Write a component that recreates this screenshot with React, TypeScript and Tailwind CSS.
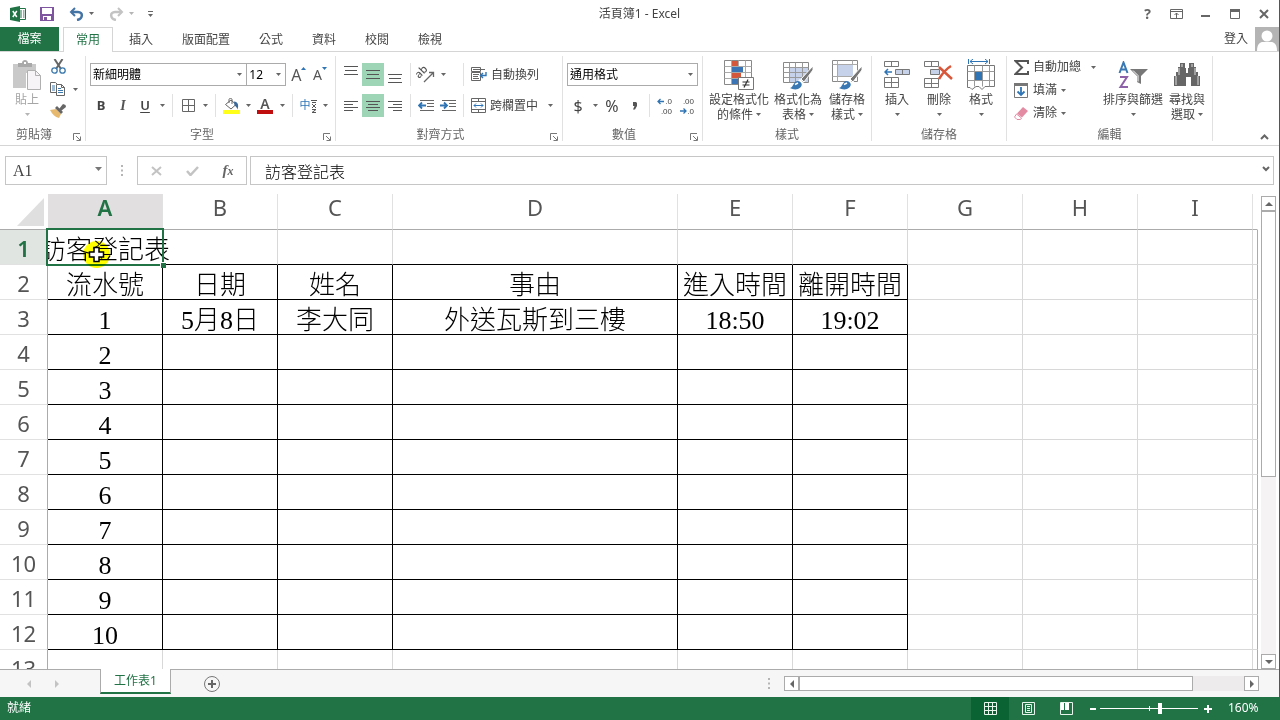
import type { ReactNode } from "react";
import { clsx } from "clsx";

/* ---------- small building blocks ---------- */

const Svg = ({ w, h, children }: { w: number; h: number; children: ReactNode }) => (
  <svg width={w} height={h} viewBox={`0 0 ${w} ${h}`} fill="none" className="shrink-0" aria-hidden="true">
    {children}
  </svg>
);

const Caret = ({ light }: { light?: boolean }) => (
  <Svg w={5} h={3}>
    <path d="M0 0h5L2.5 3z" fill={light ? "#b5b5b5" : "#666"} />
  </Svg>
);

const CaretButton = ({ label, light }: { label: string; light?: boolean }) => (
  <button aria-label={label} className="flex h-full w-3 items-center justify-center">
    <Caret light={light} />
  </button>
);

const Tool = ({ label, active, children }: { label: string; active?: boolean; children: ReactNode }) => (
  <button
    aria-label={label}
    className={clsx("flex h-full w-[22px] items-center justify-center", active && "bg-[#9fd5b7]")}
  >
    {children}
  </button>
);

const Sep = () => <div className="mx-1 h-full w-px bg-[#e1e1e1]" />;

const Row = ({ children }: { children: ReactNode }) => <div className="flex h-[23px] items-center">{children}</div>;

const Launcher = ({ label }: { label: string }) => (
  <button aria-label={label} className="flex h-[13px] w-[17px] items-end justify-center">
    <Svg w={8} h={8}>
      <path d="M.5 7V.5H7M3 3l4 4M7.5 3.5v4h-4" stroke="#777" />
    </Svg>
  </button>
);

type GroupProps = { title: string; width: string; launcher?: boolean; children: ReactNode };

const Group = ({ title, width, launcher, children }: GroupProps) => (
  <section aria-label={title} className={clsx("flex shrink-0 flex-col border-r border-[#e1e1e1]", width)}>
    <div className="min-h-0 flex-1">{children}</div>
    <div className="flex h-[13px] items-center">
      <span className="flex-1 text-center leading-[13px] text-[#666]">{title}</span>
      {launcher && <Launcher label={`${title}設定`} />}
    </div>
  </section>
);

type BigProps = { icon: ReactNode; lines: string[]; width: string; disabled?: boolean };

const BigButton = ({ icon, lines, width, disabled }: BigProps) => (
  <button
    disabled={disabled}
    className={clsx("flex flex-col items-center pt-[2px]", width, disabled ? "text-[#a6a6a6]" : "text-[#444]")}
  >
    <span className="flex h-[34px] items-center justify-center">{icon}</span>
    <span className="leading-[15px] whitespace-nowrap">{lines[0]}</span>
    <span className="flex h-[15px] items-center justify-center gap-[3px] leading-[15px] whitespace-nowrap">
      {lines[1]}
      <Caret light={disabled} />
    </span>
  </button>
);

type DropProps = { label: string; value: string; width: string };

const DropDown = ({ label, value, width }: DropProps) => (
  <div className={clsx("relative h-[23px]", width)}>
    <select
      aria-label={label}
      className="h-full w-full appearance-none border border-[#ababab] bg-white pl-[2px] text-xs text-black"
    >
      <option>{value}</option>
    </select>
    <span className="pointer-events-none absolute inset-y-0 right-[5px] flex items-center">
      <Caret />
    </span>
  </div>
);

/* ---------- icons ---------- */

const ExcelIcon = () => (
  <Svg w={16} h={16}>
    <path d="M8 2.5h7.5v11H8" fill="#fff" stroke="#217346" />
    <path d="M10 5h2M13 5h1.5M10 7h2M13 7h1.5M10 9h2M13 9h1.5M10 11h2M13 11h1.5" stroke="#217346" />
    <path d="M0 2l10-2v16L0 14z" fill="#217346" />
    <path d="M2.8 5l4 6M6.8 5l-4 6" stroke="#fff" strokeWidth="1.5" />
  </Svg>
);

const SaveIcon = () => (
  <Svg w={14} h={14}>
    <path d="M0 0h14v14H0z" fill="#8055a0" />
    <path d="M2 1h10v6H2z" fill="#fff" />
    <path d="M3 9h8v4H3z" fill="#fff" />
    <path d="M4 10h3v3H4z" fill="#8055a0" />
  </Svg>
);

const UndoIcon = () => (
  <Svg w={15} h={14}>
    <path d="M6 1L2 5l4 4" stroke="#4473a5" strokeWidth="2" />
    <path d="M2 5h7c5.500 0 5 7-1 8" stroke="#4473a5" strokeWidth="2.500" />
  </Svg>
);

const RedoIcon = () => (
  <Svg w={15} h={14}>
    <path d="M9 1l4 4-4 4" stroke="#c3c3c3" strokeWidth="2" />
    <path d="M13 5H6C.5 5 1 12 7 13" stroke="#c3c3c3" strokeWidth="2.500" />
  </Svg>
);

const PasteIcon = () => (
  <Svg w={28} h={30}>
    <path d="M0 4h23v9H13v15H0z" fill="#c9c9c9" />
    <path d="M5 7V3h4c0-4 6-4 6 0h4v4z" fill="#a9a9a9" />
    <path d="M11 2h2v2h-2z" fill="#fff" />
    <path d="M14.500 10.500h8l5 5v14h-13z" fill="#f7f4f8" stroke="#b0b0b0" />
    <path d="M22.500 10.500v5h5" stroke="#b0b0b0" />
  </Svg>
);

const CutIcon = () => (
  <Svg w={15} h={16}>
    <path d="M3.500 0L10 10M11.500 0L5 10" stroke="#666" strokeWidth="2" />
    <circle cx="3.500" cy="11.500" r="2.700" stroke="#3a78ad" strokeWidth="1.300" />
    <circle cx="11.500" cy="11.500" r="2.700" stroke="#3a78ad" strokeWidth="1.300" />
  </Svg>
);

const CopyIcon = () => (
  <Svg w={16} h={14}>
    <path d="M.5.5h5l2 2v8h-7z" fill="#fff" stroke="#666" />
    <path d="M2 4h3M2 6h3M2 8h3" stroke="#3a78ad" />
    <path d="M6.500 2.500h5l3 3v8h-8z" fill="#fff" stroke="#666" />
    <path d="M11.500 2.500v3h3" stroke="#666" />
    <path d="M8 6.500h3M8 8.500h5M8 10.500h5" stroke="#3a78ad" />
  </Svg>
);

const BrushIcon = () => (
  <Svg w={16} h={14}>
    <path d="M0 6l6-1 5 5-2 4C5 13 2 10 0 6z" fill="#e6b96e" />
    <path d="M5 4l2-2 6 6-2 2z" fill="#666" />
    <path d="M9 5l4-5 2.500 1L16 3l-5 4z" fill="#666" />
  </Svg>
);

const GridIcon = () => (
  <Svg w={13} h={13}>
    <path d="M.5.5h12v12H.5zM6.500.5v12M.5 6.500h12" stroke="#666" />
  </Svg>
);

const FillIcon = () => (
  <Svg w={17} h={16}>
    <path d="M2.500 6.500L8 2l5 4.500L8 11z" fill="#fff" stroke="#666" />
    <path d="M6 5V1.500C6 0 9 0 9 1.500V6" stroke="#666" />
    <path d="M11 3.500c4 0 5 4 3.500 8-.5-2-1.500-3-3-4z" fill="#3a6a9c" />
    <path d="M0 12h17v4H0z" fill="#ffff1a" />
  </Svg>
);

const OrientationIcon = () => (
  <Svg w={22} h={23}>
    <text x="4" y="16" fontSize="11" fontFamily="Noto Sans" fontWeight="500" fill="#555" transform="rotate(-45 4 16)">
      ab
    </text>
    <path d="M9 19l9-9M14 9.500h4.500V14" stroke="#666" strokeWidth="1.300" />
  </Svg>
);

const IndentIcon = ({ out }: { out?: boolean }) => (
  <Svg w={16} h={11}>
    <path d="M2 .5h14M9 3.500h7M9 6.500h7M2 10.500h14" stroke="#666" />
    {out ? (
      <path d="M1 5.500h7M4 2.500l-3 3 3 3" stroke="#2f74b5" strokeWidth="1.800" />
    ) : (
      <path d="M0 5.500h7M4 2.500l3 3-3 3" stroke="#2f74b5" strokeWidth="1.800" />
    )}
  </Svg>
);

/* horizontal strokes, given as [start, end] on a 14px line */
const LinesIcon = ({ spans, shift = 0 }: { spans: number[][]; shift?: number }) => (
  <Svg w={14} h={20}>
    {spans.map(([a, b], i) => (
      <path key={i} d={`M${a} ${5.5 + shift + i * (spans.length === 3 ? 4 : 3)}H${b}`} stroke="#555" />
    ))}
  </Svg>
);

const WrapIcon = () => (
  <Svg w={16} h={15}>
    <path d="M.5.5h9v4h-9zM.5 5.500h9v8h-9z" stroke="#666" />
    <path d="M2 2.500h12M2 7.500h6M2 9.500h5M2 11.500h6" stroke="#666" />
    <path d="M15 5v3.500H9.500M12 6L9.500 8.500 12 11" stroke="#2f74b5" strokeWidth="1.400" />
  </Svg>
);

const MergeIcon = () => (
  <Svg w={15} h={15}>
    <path d="M.5.5h14v14H.5zM.5 3.500h14M.5 11.500h14M7.500.5v3M7.500 11.500v3" stroke="#666" />
    <path d="M3 7.500h9M5 5.500l-2 2 2 2M10 5.500l2 2-2 2" stroke="#2f74b5" />
  </Svg>
);

const DecimalIcon = ({ more }: { more?: boolean }) => (
  <Svg w={18} h={20}>
    <g fontSize="8" fontFamily="Liberation Sans" fill="#444" textAnchor="end">
      <text x="16" y="8">
        {more ? ".0" : ".00"}
      </text>
      <text x="16" y="18">
        {more ? ".00" : ".0"}
      </text>
    </g>
    {more ? (
      <path d="M2 5.500h6M4.500 3L2 5.500 4.500 8" stroke="#2f74b5" strokeWidth="1.300" />
    ) : (
      <path d="M2 15h6M5.500 12.500L8 15l-2.500 2.500" stroke="#2f74b5" strokeWidth="1.300" />
    )}
  </Svg>
);

const ConditionalIcon = () => (
  <Svg w={30} h={32}>
    <path d="M.5 1.500h27v24H.5z" fill="#fff" stroke="#888" />
    <path d="M.5 7.500h27M.5 13.500h27M.5 19.500h27M7.500 1.500v24M14.500 1.500v24M21.500 1.500v24" stroke="#aaa" />
    <path d="M8 2h6v5H8zM8 14h9v5H8z" fill="#d5573b" />
    <path d="M8 8h11v5H8zM8 20h6v5H8z" fill="#3a74b4" />
    <path d="M14.500 18.500h15v12h-15z" fill="#fff" stroke="#777" />
    <path d="M18.500 23h7M18.500 26h7M24 20.500l-4 8" stroke="#333" strokeWidth="1.200" />
  </Svg>
);

const Brush = () => (
  <>
    <path d="M30 7L18 20l3 3 9-12z" fill="#777" stroke="#fff" />
    <path d="M17 20l4 4-2 3-5-4z" fill="#fff" />
    <path d="M7 29c4-1 3-7 8-7 5 1 5 6 0 8-3 1-6 0-8-1z" fill="#3a78b4" />
    <path d="M12 25.500l3-1.500" stroke="#fff" strokeWidth="1.500" />
  </>
);

const FormatTableIcon = () => (
  <Svg w={30} h={32}>
    <path d="M.5 3.500h25v20H.5z" fill="#fff" stroke="#888" />
    <path d="M7 9h18v14H7z" fill="#c5d2ea" />
    <path d="M.5 8.500h25M.5 13.500h25M.5 18.500h25M6.500 3.500v20M12.500 3.500v20M19.500 3.500v20" stroke="#999" />
    <Brush />
  </Svg>
);

const CellStyleIcon = () => (
  <Svg w={30} h={32}>
    <path d="M.5 1.500h25v21H.5z" fill="#fff" stroke="#888" />
    <path d="M.5 5.500h25M.5 17.500h25M5.500 1.500v21M20.500 1.500v21" stroke="#aaa" />
    <path d="M6 6h15v11H6z" fill="#c5d2ea" />
    <Brush />
  </Svg>
);

const InsertCellsIcon = () => (
  <Svg w={26} h={30}>
    <path d="M.5 1.500h14v5H.5zM7.500 1.500v5M.5 17.500h14v10H.5zM7.500 17.500v10M.5 22.500h14" fill="#fff" stroke="#777" />
    <path d="M11.500 9.500h14v5h-14zM18.500 9.500v5" fill="#c5d2ea" stroke="#777" />
    <path d="M1 12h7M4 9l-3 3 3 3" stroke="#2f74b5" strokeWidth="1.500" />
  </Svg>
);

const DeleteCellsIcon = () => (
  <Svg w={30} h={30}>
    <path d="M.5 1.500h14v5H.5zM7.500 1.500v5M.5 18.500h14v9H.5zM7.500 18.500v9M.5 23.500h14" fill="#fff" stroke="#777" />
    <path d="M6.500 9.500h9v5h-9z" fill="#c5d2ea" stroke="#777" />
    <path d="M15 7l13 12M27 6C22 9 18 14 15 19" stroke="#d8573a" strokeWidth="2.500" />
  </Svg>
);

const FormatCellsIcon = () => (
  <Svg w={29} h={32}>
    <path d="M1.500 0v5M22.500 0v5M3 2.500h18M6 0L3 2.500 6 5M18 0l3 2.500L18 5" stroke="#2f74b5" />
    <path d="M.5 6.500h27v21H18l-3 3-3-3H9l-4 3-2-2H.5z" fill="#fff" stroke="#777" />
    <path d="M.5 12.500h27M.5 21.500h27M7.500 6.500v21M15.500 6.500v21M22.500 6.500v21" stroke="#999" />
    <path d="M8 13h7v8H8z" fill="#2f74b5" />
  </Svg>
);

const SumIcon = () => (
  <Svg w={15} h={15}>
    <path d="M14 4V1H1.500l6.500 6.500L1.500 14H14v-3" stroke="#555" strokeWidth="2" />
  </Svg>
);

const FillDownIcon = () => (
  <Svg w={14} h={15}>
    <path d="M.5.5h13v14H.5z" fill="#fff" stroke="#777" />
    <path d="M0 0h14v3H0z" fill="#777" />
    <path d="M7 4v8M3.500 8.500L7 12l3.500-3.500" stroke="#2f74b5" strokeWidth="1.800" />
  </Svg>
);

const EraserIcon = () => (
  <Svg w={14} h={13}>
    <path d="M9 0l5 4-6 6.500L3 6.500z" fill="#e48ba4" />
    <path d="M2.500 7l5 4-1 1.500H3L.5 10z" fill="#fff" stroke="#e48ba4" />
  </Svg>
);

const SortIcon = () => (
  <Svg w={30} h={28}>
    <path d="M1.500 12L5.500 1.500 9.500 12M3 8.500h5" stroke="#3a78b4" strokeWidth="2" />
    <path d="M2 16h7L2.500 26H10" stroke="#8d62a8" strokeWidth="2" />
    <path d="M12 8h18l-7 7v8l-4-2v-6z" fill="#777" />
    <path d="M15 9.500l5 5v6" stroke="#fff" />
  </Svg>
);

const FindIcon = () => (
  <Svg w={26} h={26}>
    <path d="M6 1h5v5h1v5h2V6h1V1h5v4h2v5h2v4h2v10h-9v-9h-5v9H0V14h2v-4h2V5h2z" fill="#666" />
    <path d="M2 14v9M24 14v9M5 6v7M21 6v7M8 2v3M18 2v3" stroke="#ddd" />
  </Svg>
);

/* ---------- title bar and tabs ---------- */

const TitleBar = () => (
  <header className="flex h-[27px] shrink-0 items-center">
    <div className="flex flex-1 items-center pl-[10px]">
      <ExcelIcon />
      <button aria-label="儲存檔案" className="ml-[14px]">
        <SaveIcon />
      </button>
      <button aria-label="復原" className="ml-[15px] flex items-center gap-[5px]">
        <UndoIcon />
        <Caret />
      </button>
      <button aria-label="取消復原" className="ml-[15px] flex items-center gap-[5px]">
        <RedoIcon />
        <Caret light />
      </button>
      <button aria-label="自訂快速存取工具列" className="ml-[14px]">
        <Svg w={5} h={6}>
          <path d="M0 .5h5" stroke="#666" />
          <path d="M0 3h5L2.500 6z" fill="#666" />
        </Svg>
      </button>
    </div>
    <h1 className="text-xs text-[#444]">活頁簿1 - Excel</h1>
    <div className="flex flex-1 items-center justify-end pr-[10px]">
      <button aria-label="說明" className="w-[29px] text-sm font-bold text-[#666]">
        ?
      </button>
      <button aria-label="功能區顯示選項" className="flex w-[29px] justify-center">
        <Svg w={13} h={10}>
          <path d="M.5.5h12v9H.5zM.5 2.500h12M6.500 9V4M4.500 6l2-2 2 2" stroke="#666" />
        </Svg>
      </button>
      <button aria-label="最小化" className="flex w-[29px] justify-center">
        <Svg w={9} h={10}>
          <path d="M0 7h9" stroke="#666" strokeWidth="2" />
        </Svg>
      </button>
      <button aria-label="往下還原" className="flex w-[29px] justify-center">
        <Svg w={10} h={10}>
          <path d="M.5.5h9v9H.5z" stroke="#666" />
          <path d="M0 0h10v3H0z" fill="#666" />
        </Svg>
      </button>
      <button aria-label="關閉" className="ml-[10px] flex justify-center">
        <Svg w={10} h={10}>
          <path d="M1 1l8 8M9 1L1 9" stroke="#666" strokeWidth="2" />
        </Svg>
      </button>
    </div>
  </header>
);

const tabs = ["常用", "插入", "版面配置", "公式", "資料", "校閱", "檢視"];

const TabRow = () => (
  <nav className="flex h-[25px] shrink-0 border-b border-[#d5d5d5]">
    <button className="mr-1 w-[59px] bg-[#217346] text-white">檔案</button>
    <div className="flex gap-[3px]">
      {tabs.map((tab, i) => (
        <button
          key={tab}
          className={clsx(
            "-mb-px border-x border-t px-3",
            i === 0 ? "border-[#d5d5d5] bg-white text-[#217346]" : "border-transparent text-[#444]"
          )}
        >
          {tab}
        </button>
      ))}
    </div>
    <button className="ml-auto flex items-center gap-[7px] text-[#444]">
      登入
      <Svg w={24} h={24}>
        <path d="M0 0h24v24H0z" fill="#b4b4b4" />
        <circle cx="12" cy="9" r="5.500" fill="#fff" />
        <path d="M2 24c0-7 3-9 6-9h8c3 0 6 2 6 9z" fill="#fff" />
      </Svg>
    </button>
  </nav>
);

/* ---------- ribbon ---------- */

const Ribbon = () => (
  <div className="flex h-[94px] shrink-0 border-b border-[#d5d5d5] py-1">
    <Group title="剪貼簿" width="w-[86px]" launcher>
      <div className="flex pl-[7px]">
        <BigButton icon={<PasteIcon />} lines={["貼上"]} width="w-10" disabled />
        <div className="flex flex-col">
          <div className="flex h-[22px]">
            <Tool label="剪下">
              <CutIcon />
            </Tool>
          </div>
          <div className="flex h-[22px]">
            <Tool label="複製">
              <CopyIcon />
            </Tool>
            <CaretButton label="複製選項" />
          </div>
          <div className="flex h-[22px]">
            <Tool label="複製格式">
              <BrushIcon />
            </Tool>
          </div>
        </div>
      </div>
    </Group>

    <Group title="字型" width="w-[250px]" launcher>
      <div className="flex flex-col gap-2 pt-[7px] pl-1">
        <Row>
          <DropDown label="字型名稱" value="新細明體" width="w-[158px]" />
          <DropDown label="字型大小" value="12" width="w-10 -ml-px" />
          <button aria-label="放大字型" className="ml-[5px] flex w-[22px] items-center text-base text-[#555]">
            A
            <span className="pb-3">
              <Svg w={5} h={3}>
                <path d="M0 3h5L2.500 0z" fill="#2f74b5" />
              </Svg>
            </span>
          </button>
          <button aria-label="縮小字型" className="flex w-[22px] items-center text-sm text-[#555]">
            A
            <span className="pb-3">
              <Svg w={5} h={3}>
                <path d="M0 0h5L2.500 3z" fill="#2f74b5" />
              </Svg>
            </span>
          </button>
        </Row>
        <Row>
          <Tool label="粗體">
            <b className="text-[13px] text-[#444]">B</b>
          </Tool>
          <Tool label="斜體">
            <i className="font-[Liberation_Serif] text-sm font-bold text-[#555]">I</i>
          </Tool>
          <Tool label="底線">
            <span className="text-[13px] font-semibold text-[#444] underline underline-offset-2">U</span>
          </Tool>
          <CaretButton label="底線選項" />
          <Sep />
          <Tool label="框線">
            <GridIcon />
          </Tool>
          <CaretButton label="框線選項" />
          <Sep />
          <Tool label="填滿色彩">
            <FillIcon />
          </Tool>
          <CaretButton label="填滿色彩選項" />
          <Tool label="字型色彩">
            <span className="flex w-4 flex-col items-center border-b-4 border-[#c00d0d] text-sm leading-[13px] font-semibold text-[#555]">
              A
            </span>
          </Tool>
          <CaretButton label="字型色彩選項" />
          <Sep />
          <Tool label="注音標示">
            <span className="text-[11px] text-[#2f74b5]">中</span>
            <Svg w={6} h={14}>
              <path d="M0 1.500h6M1 3.500h4M1 5l4 4M5 5L1 9M1 10.500h4L1 13.500h4" stroke="#555" />
            </Svg>
          </Tool>
          <CaretButton label="注音標示選項" />
        </Row>
      </div>
    </Group>

    <Group title="對齊方式" width="w-[227px]" launcher>
      <div className="flex flex-col gap-2 pt-[7px] pl-1">
        <Row>
          <Tool label="靠上對齊">
            <LinesIcon spans={[[0, 14], [1, 13], [0, 14]]} shift={-4} />
          </Tool>
          <Tool label="置中對齊" active>
            <LinesIcon spans={[[0, 14], [1, 13], [0, 14]]} />
          </Tool>
          <Tool label="靠下對齊">
            <LinesIcon spans={[[0, 14], [1, 13], [0, 14]]} shift={4} />
          </Tool>
          <Sep />
          <div className="flex h-full w-11">
            <Tool label="方向">
              <OrientationIcon />
            </Tool>
            <CaretButton label="方向選項" />
          </div>
          <Sep />
          <button className="flex items-center gap-1 px-[3px] text-[#444]">
            <WrapIcon />
            自動換列
          </button>
        </Row>
        <Row>
          <Tool label="靠左對齊">
            <LinesIcon spans={[[0, 14], [0, 9], [0, 14], [0, 9]]} />
          </Tool>
          <Tool label="置中" active>
            <LinesIcon spans={[[0, 14], [2, 12], [0, 14], [2, 12]]} />
          </Tool>
          <Tool label="靠右對齊">
            <LinesIcon spans={[[0, 14], [5, 14], [0, 14], [5, 14]]} />
          </Tool>
          <Sep />
          <Tool label="減少縮排">
            <IndentIcon out />
          </Tool>
          <Tool label="增加縮排">
            <IndentIcon />
          </Tool>
          <Sep />
          <button className="flex items-center gap-1 px-[3px] text-[#444]">
            <MergeIcon />
            <span className="pr-[3px]">跨欄置中</span>
          </button>
          <CaretButton label="跨欄置中選項" />
        </Row>
      </div>
    </Group>

    <Group title="數值" width="w-[140px]" launcher>
      <div className="flex flex-col gap-2 pt-[7px] pl-1">
        <Row>
          <DropDown label="數值格式" value="通用格式" width="w-[131px]" />
        </Row>
        <Row>
          <Tool label="會計數字格式">
            <span className="text-base text-[#444]">$</span>
          </Tool>
          <CaretButton label="會計數字格式選項" />
          <Tool label="百分比樣式">
            <span className="text-base text-[#444]">%</span>
          </Tool>
          <Tool label="千分位樣式">
            <Svg w={5} h={8}>
              <path d="M1 0h3l1 1v3L3 7.500H1L2.500 4H1z" fill="#555" />
            </Svg>
          </Tool>
          <Sep />
          <Tool label="增加小數位數">
            <DecimalIcon more />
          </Tool>
          <Tool label="減少小數位數">
            <DecimalIcon />
          </Tool>
        </Row>
      </div>
    </Group>

    <Group title="樣式" width="w-[169px]">
      <div className="flex pl-1">
        <BigButton icon={<ConditionalIcon />} lines={["設定格式化", "的條件"]} width="w-16" />
        <BigButton icon={<FormatTableIcon />} lines={["格式化為", "表格"]} width="w-[54px]" />
        <BigButton icon={<CellStyleIcon />} lines={["儲存格", "樣式"]} width="w-11" />
      </div>
    </Group>

    <Group title="儲存格" width="w-[135px]">
      <div className="flex pl-1">
        <BigButton icon={<InsertCellsIcon />} lines={["插入"]} width="w-[42px]" />
        <BigButton icon={<DeleteCellsIcon />} lines={["刪除"]} width="w-[42px]" />
        <BigButton icon={<FormatCellsIcon />} lines={["格式"]} width="w-[42px]" />
      </div>
    </Group>

    <Group title="編輯" width="w-[206px]">
      <div className="flex pl-1">
        <div className="flex w-[90px] flex-col items-start pl-[3px] text-[#444]">
          <button className="flex h-[22px] items-center gap-1">
            <SumIcon />
            自動加總
            <span className="pl-[6px]">
              <Caret />
            </span>
          </button>
          <button className="flex h-6 items-center gap-1">
            <span className="w-[15px]">
              <FillDownIcon />
            </span>
            填滿
            <Caret />
          </button>
          <button className="flex h-[22px] items-center gap-1">
            <span className="w-[15px]">
              <EraserIcon />
            </span>
            清除
            <Caret />
          </button>
        </div>
        <BigButton icon={<SortIcon />} lines={["排序與篩選"]} width="w-16" />
        <BigButton icon={<FindIcon />} lines={["尋找與", "選取"]} width="w-11" />
      </div>
    </Group>

    <button aria-label="摺疊功能區" className="mt-auto mr-[10px] mb-px ml-auto">
      <Svg w={9} h={6}>
        <path d="M1 5l3.500-3.500L8 5" stroke="#666" strokeWidth="2" />
      </Svg>
    </button>
  </div>
);

/* ---------- formula bar ---------- */

const Dots = () => (
  <Svg w={2} h={11}>
    <path d="M0 0h2v2H0zM0 4.500h2v2H0zM0 9h2v2H0z" fill="#b5b5b5" />
  </Svg>
);

const FormulaBar = () => (
  <div className="flex h-12 shrink-0 pt-[10px] pr-[5px] pb-[9px] pl-[5px]">
    <div className="relative w-[102px]">
      <input
        aria-label="名稱方塊"
        defaultValue="A1"
        className="h-full w-full border border-[#c6c6c6] px-[7px] font-[Liberation_Serif] text-base text-[#444]"
      />
      <button aria-label="名稱清單" className="absolute inset-y-0 right-0 w-5 pb-1 pl-2">
        <Svg w={7} h={4}>
          <path d="M0 0h7L3.500 4z" fill="#777" />
        </Svg>
      </button>
    </div>
    <div className="flex w-[30px] items-center justify-center">
      <Dots />
    </div>
    <div className="flex w-[110px] items-center border border-[#c6c6c6]">
      <button aria-label="取消" className="flex w-9 justify-center">
        <Svg w={11} h={10}>
          <path d="M1 1l9 8M10 1L1 9" stroke="#c3c3c3" strokeWidth="2" />
        </Svg>
      </button>
      <button aria-label="輸入" className="flex w-9 justify-center">
        <Svg w={13} h={10}>
          <path d="M1 5l3.500 4L12 1" stroke="#c3c3c3" strokeWidth="2.500" />
        </Svg>
      </button>
      <button
        aria-label="插入函數"
        className="w-9 font-[Liberation_Serif] text-[15px] leading-4 font-bold text-[#666] italic"
      >
        f<span className="text-xs">x</span>
      </button>
    </div>
    <div className="relative ml-[3px] flex-1">
      <input
        aria-label="資料編輯列"
        defaultValue="訪客登記表"
        className="h-full w-full border border-[#c6c6c6] pl-[14px] font-['Liberation_Serif','Noto_Sans_CJK_TC',serif] text-base font-light text-black"
      />
      <button aria-label="展開資料編輯列" className="absolute inset-y-0 right-1 flex items-center pb-1">
        <Svg w={8} h={6}>
          <path d="M1 1l3 3 3-3" stroke="#666" strokeWidth="2" />
        </Svg>
      </button>
    </div>
  </div>
);

/* ---------- worksheet ---------- */

const columns = ["A", "B", "C", "D", "E", "F", "G", "H", "I", ""];

const rows = [
  ["訪客登記表"],
  ["流水號", "日期", "姓名", "事由", "進入時間", "離開時間"],
  ["1", "5月8日", "李大同", "外送瓦斯到三樓", "18:50", "19:02"],
  ["2"],
  ["3"],
  ["4"],
  ["5"],
  ["6"],
  ["7"],
  ["8"],
  ["9"],
  ["10"],
  [],
];

// the framed table covers A2:F12, so row 0 carries its top edge
const cellBorder = (r: number, c: number) =>
  clsx(
    "border-r border-b",
    c < 6 && r < 12 ? "border-b-black" : "border-b-[#d8d8d8]",
    c < 6 && r > 0 && r < 12 ? "border-r-black" : c === 9 ? "border-r-[#ababab]" : "border-r-[#d8d8d8]"
  );

const Selection = () => (
  <>
    <div className="absolute -inset-[2px] z-20 border-2 border-[#217346]" />
    <div className="absolute -right-1 -bottom-1 z-20 size-[6px] border-t border-l border-white bg-[#217346]" />
    <div className="absolute top-[11px] left-[35px] z-20 size-[27px] rounded-full bg-[#ffff00] mix-blend-multiply" />
    <div className="absolute top-4 left-10 z-20">
      <Svg w={17} h={17}>
        <path
          d="M6 1.500h5V6h4.500v5H11v4.500H6V11H1.500V6H6z"
          fill="#fff"
          stroke="#000"
          strokeWidth="1.500"
        />
      </Svg>
    </div>
  </>
);

const Sheet = () => (
  <div className="min-w-0 flex-1 overflow-hidden">
    <table className="w-full table-fixed border-separate border-spacing-0">
      <colgroup>
        <col className="w-12" />
        {columns.map((name, c) => (
          <col key={c} className={name === "D" ? "w-[285px]" : name ? "w-[115px]" : ""} />
        ))}
      </colgroup>
      <thead>
        <tr>
          <th aria-label="全選" className="h-9 border-b border-[#ababab] p-0">
            <div className="flex justify-end pr-1">
              <Svg w={27} h={28}>
                <path d="M27 0v28H0z" fill="#dfdfdf" />
              </Svg>
            </div>
          </th>
          {columns.map((name, c) => (
            <th
              key={c}
              scope="col"
              className={clsx(
                "h-9 border-r border-b border-r-[#e1e1e1] border-b-[#ababab] p-0 pb-[9px] text-[22px] leading-[26px]",
                c === 0 ? "bg-[#e1dfe0] font-semibold text-[#217346]" : "font-normal text-[#555]",
                c === 9 && "border-r-transparent"
              )}
            >
              {name}
            </th>
          ))}
        </tr>
      </thead>
      <tbody>
        {rows.map((row, r) => (
          <tr key={r}>
            <th
              scope="row"
              className={clsx(
                "relative z-10 h-[35px] border-r border-b border-r-[#ababab] border-b-[#e1e1e1] p-0 text-[22px]",
                r === 0 ? "bg-[#e1e5e2] font-semibold text-[#217346]" : "bg-white font-normal text-[#555]"
              )}
            >
              <div className="pt-[2px] leading-8">{r + 1}</div>
            </th>
            {columns.map((_, c) => (
              <td
                key={c}
                className={clsx(
                  "relative h-[35px] p-0 font-['Liberation_Serif','Noto_Sans_CJK_TC',serif] text-[26px] font-light text-black",
                  cellBorder(r, c)
                )}
              >
                <div className="flex h-[34px] justify-center pt-[7px] leading-[27px] whitespace-nowrap">{row[c]}</div>
                {r === 0 && c === 0 && <Selection />}
              </td>
            ))}
          </tr>
        ))}
      </tbody>
    </table>
  </div>
);

const arrows = {
  up: "M0 6l4-4 4 4z",
  down: "M0 2h8L4 6z",
  left: "M6 0v8L2 4z",
  right: "M2 0v8l4-4z",
};

const ArrowButton = ({ label, dir }: { label: string; dir: keyof typeof arrows }) => (
  <button
    aria-label={label}
    className="flex size-[15px] shrink-0 items-center justify-center border border-[#ababab] bg-white"
  >
    <Svg w={8} h={8}>
      <path d={arrows[dir]} fill="#666" />
    </Svg>
  </button>
);

const VerticalScroll = () => (
  <div className="flex w-[21px] shrink-0 flex-col pt-[2px] pl-[3px]">
    <ArrowButton label="向上捲動" dir="up" />
    <div className="w-[15px] flex-1 bg-[#f5f3f4]">
      <div className="h-3/5 border border-[#ababab] bg-white" />
    </div>
    <ArrowButton label="向下捲動" dir="down" />
  </div>
);

/* ---------- bottom bars ---------- */

const SheetTabs = () => (
  <div className="flex h-7 shrink-0 border-t border-[#ababab] bg-[#f7f6f7]">
    <div className="flex w-[100px] items-center gap-5 pl-[25px]">
      {(["left", "right"] as const).map((dir) => (
        <button key={dir} aria-label={dir === "left" ? "上一張工作表" : "下一張工作表"}>
          <Svg w={8} h={8}>
            <path d={arrows[dir]} fill="#c3c3c3" />
          </Svg>
        </button>
      ))}
    </div>
    <button className="-mt-px h-[25px] w-[71px] border-x border-b-2 border-x-[#ababab] border-b-[#217346] bg-white text-[#217346]">
      工作表1
    </button>
    <button aria-label="新工作表" className="ml-8">
      <Svg w={18} h={18}>
        <circle cx="9" cy="9" r="7.500" stroke="#777" />
        <path d="M9 5v8M5 9h8" stroke="#666" strokeWidth="2" />
      </Svg>
    </button>
    <div className="mr-[14px] ml-auto flex items-center">
      <Dots />
    </div>
    <div className="mr-5 flex w-[475px] items-center">
      <ArrowButton label="向左捲動" dir="left" />
      <div className="h-[15px] flex-1 bg-[#eeebed]">
        <div className="h-full w-[88.500%] border border-[#ababab] bg-white" />
      </div>
      <ArrowButton label="向右捲動" dir="right" />
    </div>
  </div>
);

const StatusBar = () => (
  <footer className="flex h-[23px] shrink-0 items-center bg-[#217346] text-white">
    <span className="pb-[2px] pl-[7px]">就緒</span>
    <button aria-label="標準模式" className="ml-auto flex h-full w-[38px] items-center justify-center bg-[#0a6332]">
      <Svg w={13} h={13}>
        <path d="M.5.5h12v12H.5zM4.500.5v12M8.500.5v12M.5 4.500h12M.5 8.500h12" stroke="#e8f5ec" />
      </Svg>
    </button>
    <button aria-label="整頁模式" className="flex h-full w-[38px] items-center justify-center">
      <Svg w={13} h={13}>
        <path d="M.5.5h12v12H.5zM3.500 2.500h6v8h-6zM5 4.500h3M5 6.500h3M5 8.500h3" stroke="#e8f5ec" />
      </Svg>
    </button>
    <button aria-label="分頁預覽" className="flex h-full w-[38px] items-center justify-center">
      <Svg w={13} h={13}>
        <path d="M.5.5h12v12H.5z" stroke="#e8f5ec" />
        <path d="M1 1h3v7H1zM5 1h4v7H5z" fill="#fff" />
      </Svg>
    </button>
    <button aria-label="縮小" className="ml-[5px]">
      <Svg w={6} h={8}>
        <path d="M0 4h6" stroke="#fff" strokeWidth="2" />
      </Svg>
    </button>
    <div className="relative mx-1 flex h-full w-[98px] items-center">
      <span className="absolute left-1/2 h-[5px] w-px bg-white" />
      <input
        type="range"
        aria-label="縮放比例"
        defaultValue={62}
        className="h-px w-full appearance-none bg-white [&::-webkit-slider-thumb]:h-[11px] [&::-webkit-slider-thumb]:w-1 [&::-webkit-slider-thumb]:appearance-none [&::-webkit-slider-thumb]:bg-white"
      />
    </div>
    <button aria-label="放大" className="mx-[2px]">
      <Svg w={8} h={8}>
        <path d="M0 4h8M4 0v8" stroke="#fff" strokeWidth="2" />
      </Svg>
    </button>
    <button className="w-[66px] pb-px pl-[14px] text-left">160%</button>
  </footer>
);

export default function App() {
  return (
    <div className="flex h-screen flex-col overflow-hidden bg-white font-['Noto_Sans','Noto_Sans_CJK_TC',sans-serif] text-xs">
      <div className="flex min-h-0 flex-1 flex-col border-r border-[#217346]">
        <TitleBar />
        <TabRow />
        <Ribbon />
        <FormulaBar />
        <main className="flex min-h-0 flex-1">
          <Sheet />
          <VerticalScroll />
        </main>
        <SheetTabs />
      </div>
      <StatusBar />
    </div>
  );
}
